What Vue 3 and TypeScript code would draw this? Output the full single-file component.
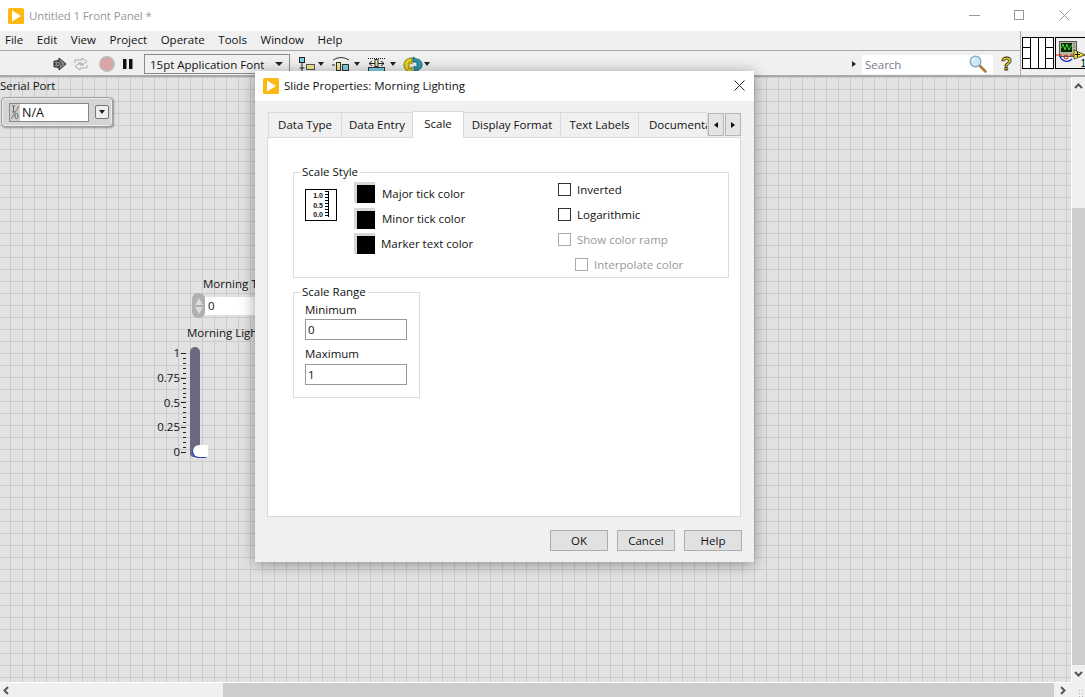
<script setup lang="ts">
const menus = ["File", "Edit", "View", "Project", "Operate", "Tools", "Window", "Help"];

const tabs = [
  { label: "Data Type", width: 74 },
  { label: "Data Entry", width: 71 },
  { label: "Scale", width: 51, active: true },
  { label: "Display Format", width: 97 },
  { label: "Text Labels", width: 78 },
  { label: "Documentation", width: 69 },
];

const colors = ["Major tick color", "Minor tick color", "Marker text color"];
const scaleMarks = ["1", "0.75", "0.5", "0.25", "0"];
const tickCount = 21;
</script>

<template>
  <div class="window">
    <header class="titlebar">
      <svg class="app-icon" width="16" height="16" viewBox="0 0 16 16">
        <rect width="16" height="16" rx="1.5" fill="#fdb913" />
        <path d="M4 2.5 L13 8 L4 13.5 Z" fill="#fff" />
      </svg>
      <span class="title-text">Untitled 1 Front Panel *</span>
      <div class="win-controls">
        <svg width="11" height="11" viewBox="0 0 11 11"><path d="M0 5.5H11" stroke="#999" /></svg>
        <svg width="11" height="11" viewBox="0 0 11 11"><rect x=".5" y=".5" width="9" height="9" fill="none" stroke="#999" /></svg>
        <svg width="11" height="11" viewBox="0 0 11 11"><path d="M.5.5L10.5 10.5M10.5.5L.5 10.5" stroke="#999" /></svg>
      </div>
    </header>

    <div class="chrome">
      <div class="chrome-main">
        <nav class="menubar">
          <span v-for="m in menus" :key="m">{{ m }}</span>
        </nav>
        <div class="toolbar">
          <svg class="tool-run" width="16" height="14" viewBox="0 0 16 14">
            <path d="M2 4H7V1L14 7L7 13V10H2Z" fill="#8a8a8a" stroke="#222" />
            <path d="M2 7H8M5 3L10 7L5 11" fill="none" stroke="#111" stroke-dasharray="2 1" />
          </svg>
          <svg class="tool-cont" width="16" height="14" viewBox="0 0 16 14">
            <path d="M2 6V3H9V1L14 4.5L9 8V6H5" fill="#f2f2f2" stroke="#aaa" />
            <path d="M14 8V11H7V13L2 9.5L7 6V8H11" fill="#f2f2f2" stroke="#aaa" />
          </svg>
          <svg class="tool-abort" width="16" height="16" viewBox="0 0 16 16">
            <circle cx="8" cy="8" r="7.2" fill="#d9a5a5" stroke="#bbb" stroke-width="1.4" />
          </svg>
          <svg class="tool-pause" width="10" height="10" viewBox="0 0 10 10">
            <path d="M0 0H3.5V10H0ZM6 0H9.5V10H6Z" fill="#111" />
          </svg>
          <div class="font-ring">
            <span>15pt Application Font</span>
            <i class="caret"></i>
          </div>
          <div class="align-tools">
            <span class="tool-drop">
              <svg width="18" height="17" viewBox="0 0 18 17">
                <rect x=".5" y="1.5" width="5" height="5" fill="#7fd0e8" stroke="#222" />
                <path d="M3 7V15M.5 12H5.5" stroke="#222" />
                <rect x="7.5" y="8.5" width="8" height="5" fill="#f2ea8e" stroke="#555" />
                <path d="M8 15.5H15" stroke="#555" stroke-dasharray="1 1" />
              </svg>
              <i class="caret small"></i>
            </span>
            <span class="tool-drop">
              <svg width="22" height="17" viewBox="0 0 22 17">
                <path d="M2 4Q10 -1 18 4" fill="none" stroke="#333" />
                <path d="M1 9H4" stroke="#222" />
                <rect x="5.5" y="6.5" width="4" height="8" fill="#f2ea8e" stroke="#333" />
                <rect x="11.5" y="8.5" width="6" height="6" fill="#7fd0e8" stroke="#333" />
              </svg>
              <i class="caret small"></i>
            </span>
            <span class="tool-drop">
              <svg width="22" height="17" viewBox="0 0 22 17">
                <path d="M1 2.5H18" stroke="#222" stroke-dasharray="1 1" />
                <path d="M2 7.5H17M5 5L2 7.5L5 10M14 5L17 7.5L14 10" fill="none" stroke="#222" />
                <rect x="8" y="3.5" width="3" height="7" fill="#f2ea8e" stroke="#333" />
                <rect x="1.5" y="11.5" width="16" height="4" fill="#7fd0e8" stroke="#333" />
              </svg>
              <i class="caret small"></i>
            </span>
            <span class="tool-drop">
              <svg width="20" height="17" viewBox="0 0 20 17">
                <path d="M9 2C4 2 1 5 1 9C1 12 3 15 6 15.5L9 16V11L6 13V6L9 8Z" fill="#e3d317" stroke="#8a7c00" />
                <path d="M10 1L13 3C17 3 19 6 19 9C19 12 16 15 11 15V10L14 12V6L10 6Z" fill="#2d9cb0" stroke="#14606e" />
              </svg>
              <i class="caret small"></i>
            </span>
          </div>
          <div class="search-area">
            <i class="search-arrow"></i>
            <div class="search-box">
              <span>Search</span>
              <svg width="18" height="18" viewBox="0 0 18 18">
                <path d="M10 10L16.5 16.5" stroke="#b07a3e" stroke-width="2.6" stroke-linecap="round" />
                <circle cx="6.5" cy="6.5" r="5.3" fill="#cfe6f7" stroke="#7fa9c9" stroke-width="1.4" />
                <path d="M3.5 6A3 3 0 0 1 6.5 3" fill="none" stroke="#fff" stroke-width="1.2" />
              </svg>
            </div>
            <span class="help-mark">?</span>
          </div>
        </div>
      </div>
      <div class="chrome-right">
        <div class="conn-pane">
          <span></span><span class="tall"></span><span class="tall"></span><span></span>
          <span></span><span></span>
          <span></span><span></span>
        </div>
        <div class="vi-icon">
          <svg width="30" height="31" viewBox="0 0 30 31">
            <rect x="3.5" y="3.5" width="17" height="15" fill="#bdb89a" stroke="#555" />
            <rect x="5" y="5" width="11" height="9" fill="#0a2a0a" />
            <path d="M5.5 10L7 6L9 12L11 6L13 12L15.5 7" fill="none" stroke="#2fdc2f" />
            <path d="M18 5V12" stroke="#555" stroke-dasharray="1 1" />
            <path d="M4 18A7 7 0 0 0 16 21" fill="none" stroke="#1a2ec8" stroke-width="1.2" />
            <circle cx="10" cy="19" r="2" fill="none" stroke="#d01a1a" />
            <path d="M0 17H6M14 17H30" stroke="#e01010" />
            <path d="M18 12L29 17L18 21Z" fill="#f5ea10" stroke="#555" />
            <path d="M19 16.5H24M21.5 14V19" stroke="#111" />
            <text x="24.5" y="29" class="icon-num">1</text>
          </svg>
        </div>
      </div>
    </div>

    <div class="workspace">
      <div class="canvas">
        <div class="ctl-label serial-label">Serial Port</div>
        <div class="serial">
          <div class="serial-field">
            <svg class="io-tag" width="10" height="17" viewBox="0 0 10 17">
              <rect width="10" height="17" fill="#cfcfcf" />
              <path d="M1 15L9 2" stroke="#777" />
              <path d="M2 2H5M3.5 2V8M2 8H5" fill="none" stroke="#666" />
              <ellipse cx="6.5" cy="12" rx="1.6" ry="2.6" fill="none" stroke="#666" />
            </svg>
            <span class="serial-value">N/A</span>
          </div>
          <div class="serial-btn"><i class="caret small"></i></div>
        </div>

        <div class="ctl-label time-label">Morning Time</div>
        <div class="numeric">
          <div class="spinner">
            <i class="up"></i>
            <i class="down"></i>
          </div>
          <div class="numeric-field">0</div>
        </div>

        <div class="ctl-label light-label">Morning Lighting</div>
        <div class="slide">
          <div class="slide-marks">
            <span v-for="s in scaleMarks" :key="s">{{ s }}</span>
          </div>
          <div class="slide-ticks">
            <i v-for="n in tickCount" :key="n" :class="{ major: (n - 1) % 5 === 0 }"></i>
          </div>
          <div class="slide-track"></div>
          <div class="slide-thumb"></div>
        </div>
      </div>
      <aside class="vscroll">
        <div class="scroll-end">
          <svg width="9" height="6" viewBox="0 0 9 6"><path d="M1 5L4.5 1.5L8 5" fill="none" stroke="#555" stroke-width="2" /></svg>
        </div>
        <div class="vtrack"></div>
        <div class="scroll-end bottom">
          <svg width="9" height="6" viewBox="0 0 9 6"><path d="M1 1L4.5 4.5L8 1" fill="none" stroke="#555" stroke-width="2" /></svg>
        </div>
      </aside>
    </div>

    <footer class="hscroll">
      <div class="scroll-left">
        <svg width="6" height="9" viewBox="0 0 6 9"><path d="M5 1L1.5 4.5L5 8" fill="none" stroke="#555" stroke-width="2" /></svg>
      </div>
      <div class="hthumb"></div>
      <div class="scroll-right">
        <svg width="6" height="9" viewBox="0 0 6 9"><path d="M1 1L4.5 4.5L1 8" fill="none" stroke="#555" stroke-width="2" /></svg>
      </div>
      <div class="grip"></div>
    </footer>

    <section class="dialog">
      <div class="dialog-title">
        <svg width="16" height="16" viewBox="0 0 16 16">
          <rect width="16" height="16" rx="1.5" fill="#fdb913" />
          <path d="M4 2.5 L13 8 L4 13.5 Z" fill="#fff" />
        </svg>
        <span>Slide Properties: Morning Lighting</span>
        <svg class="dialog-close" width="11" height="11" viewBox="0 0 11 11">
          <path d="M.5.5L10.5 10.5M10.5.5L.5 10.5" stroke="#222" />
        </svg>
      </div>
      <div class="dialog-body">
        <div class="tabs">
          <div
            v-for="t in tabs"
            :key="t.label"
            class="tab"
            :class="{ active: t.active }"
            :style="{ width: t.width + 'px' }"
          >
            {{ t.label }}
          </div>
          <div class="tab-arrows">
            <button><i class="arrow-l"></i></button>
            <button><i class="arrow-r"></i></button>
          </div>
        </div>

        <div class="tab-panel">
          <fieldset class="scale-style">
            <legend>Scale Style</legend>
            <div class="style-left">
              <div class="scale-preview">
                <div class="preview-nums"><span>1.0</span><span>0.5</span><span>0.0</span></div>
                <div class="preview-ticks"></div>
              </div>
              <div class="color-list">
                <div v-for="c in colors" :key="c" class="color-row">
                  <span class="swatch"></span>
                  <span>{{ c }}</span>
                </div>
              </div>
            </div>
            <div class="style-right">
              <label class="check"><i></i>Inverted</label>
              <label class="check"><i></i>Logarithmic</label>
              <label class="check disabled"><i></i>Show color ramp</label>
              <label class="check disabled nested"><i></i>Interpolate color</label>
            </div>
          </fieldset>

          <fieldset class="scale-range">
            <legend>Scale Range</legend>
            <div class="range-label">Minimum</div>
            <div class="range-input">0</div>
            <div class="range-label second">Maximum</div>
            <div class="range-input">1</div>
          </fieldset>
        </div>

        <div class="dialog-actions">
          <button class="dlg-btn">OK</button>
          <button class="dlg-btn">Cancel</button>
          <button class="dlg-btn">Help</button>
        </div>
      </div>
    </section>
  </div>
</template>

<style>
html,
body {
  margin: 0;
  overflow: hidden;
}
</style>

<style scoped>
.window {
  position: relative;
  width: 1085px;
  height: 697px;
  display: flex;
  flex-direction: column;
  overflow: hidden;
  font-family: "Open Sans", "Noto Sans", sans-serif;
  font-size: 11.5px;
  color: #111;
  background: #f0f0f0;
}

i {
  display: block;
}

.titlebar {
  height: 31px;
  flex: none;
  display: flex;
  align-items: center;
  padding-left: 8px;
  background: #fff;
}

.title-text {
  margin-left: 5px;
  color: #999;
  letter-spacing: -0.15px;
}

.win-controls {
  margin-left: auto;
  display: flex;
  gap: 34px;
  padding-right: 15px;
}

.chrome {
  flex: none;
  height: 46px;
  display: flex;
  border-bottom: 2px solid #a9a9a9;
  box-sizing: border-box;
}

.chrome-main {
  flex: none;
  width: 1020px;
  display: flex;
  flex-direction: column;
  border-right: 1px solid #a9a9a9;
}

.menubar {
  height: 20px;
  display: flex;
  align-items: center;
  gap: 13.6px;
  padding: 0 0 2px 5px;
  box-sizing: border-box;
  border-bottom: 1px solid #a9a9a9;
}

.toolbar {
  flex: 1;
  display: flex;
  align-items: center;
  padding: 2px 0 0 52px;
}

.tool-cont {
  margin-left: 5px;
}

.tool-abort {
  margin-left: 10px;
}

.tool-pause {
  margin-left: 8px;
}

.font-ring {
  margin-left: 11px;
  width: 146px;
  height: 20px;
  box-sizing: border-box;
  display: flex;
  align-items: center;
  justify-content: space-between;
  padding: 0 6px 0 5px;
  border: 1px solid #8a8a8a;
}

.caret {
  width: 0;
  height: 0;
  border-left: 4px solid transparent;
  border-right: 4px solid transparent;
  border-top: 4px solid #222;
}

.caret.small {
  border-left-width: 3.5px;
  border-right-width: 3.5px;
}

.align-tools {
  display: flex;
  gap: 7px;
  margin-left: 9px;
}

.tool-drop {
  display: flex;
  align-items: center;
  gap: 1px;
}

.search-area {
  margin-left: auto;
  display: flex;
  align-items: center;
}

.search-arrow {
  width: 0;
  height: 0;
  border-top: 3px solid transparent;
  border-bottom: 3px solid transparent;
  border-left: 4px solid #222;
  margin-right: 1px;
}

.search-box {
  margin-left: 5px;
  width: 131px;
  height: 19px;
  box-sizing: border-box;
  background: #fff;
  display: flex;
  align-items: center;
  justify-content: space-between;
  padding: 0 6px 0 3px;
  color: #7a7a8c;
}

.help-mark {
  width: 27px;
  text-align: center;
  font: bold 18px "Liberation Sans", sans-serif;
  color: #f5e000;
  -webkit-text-stroke: 0.8px #222;
}

.chrome-right {
  flex: 1;
  min-width: 0;
  display: flex;
  gap: 1px;
  padding: 6px 0 0 1px;
}

.conn-pane {
  flex: none;
  width: 32px;
  height: 32px;
  box-sizing: border-box;
  display: grid;
  grid-template-columns: repeat(4, 1fr);
  grid-template-rows: repeat(3, 1fr);
  border: 1px solid #000;
  background: #000;
  gap: 1px;
}

.conn-pane span {
  background: #fff;
}

.conn-pane .tall {
  grid-row: span 3;
}

.vi-icon {
  flex: 1;
  min-width: 0;
  height: 32px;
  box-sizing: border-box;
  border: 1px solid #000;
  border-right: 0;
  overflow: hidden;
}

.vi-icon svg {
  display: block;
}

.icon-num {
  font: 10px "Liberation Sans", sans-serif;
}

.workspace {
  flex: 1;
  min-height: 0;
  display: flex;
}

.canvas {
  position: relative;
  flex: 1;
  border-right: 1px solid #fff;
  border-bottom: 1px solid #fff;
  background-color: #e2e2e2;
  background-image: linear-gradient(#cbcbcb 1px, transparent 1px), linear-gradient(90deg, #cbcbcb 1px, transparent 1px);
  background-size: 12px 12px;
  background-position: 10px 0;
}

.vscroll {
  width: 13px;
  flex: none;
  display: flex;
  flex-direction: column;
  background: #f0f0f0;
}

.scroll-end {
  height: 17px;
  flex: none;
  display: flex;
  align-items: center;
  justify-content: center;
}

.scroll-end.bottom {
  height: 18px;
}

.vtrack {
  flex: 1;
  margin-top: 114px;
  background: #cdcdcd;
}

.hscroll {
  height: 14px;
  flex: none;
  display: flex;
  background: #f0f0f0;
}

.scroll-left {
  width: 223px;
  flex: none;
  display: flex;
  align-items: center;
  padding-left: 3px;
  box-sizing: border-box;
}

.scroll-right {
  width: 18px;
  flex: none;
  display: flex;
  align-items: center;
  justify-content: center;
}

.hthumb {
  width: 831px;
  background: #cdcdcd;
}

.grip {
  flex: 1;
  align-self: flex-end;
  height: 8px;
  margin-left: 6px;
  background-image: radial-gradient(#b5b5b5 1px, transparent 1px);
  background-size: 3px 3px;
}

/* panel controls */
.ctl-label {
  position: absolute;
  white-space: nowrap;
  line-height: 16px;
}

.serial-label {
  left: 0;
  top: 1px;
}

.serial {
  position: absolute;
  left: 1px;
  top: 20px;
  width: 112px;
  height: 30px;
  box-sizing: border-box;
  display: flex;
  align-items: center;
  gap: 6px;
  padding: 0 3px 0 7px;
  border-radius: 4px;
  background: #d5d5d5;
  border: 1px solid #a0a0a0;
  box-shadow: inset 0 0 0 1px #ececec, 1px 1px 2px rgba(0, 0, 0, 0.35);
}

.serial-field {
  width: 81px;
  height: 19px;
  display: flex;
  box-sizing: border-box;
  border: 1px solid #888;
  background: #fff;
}

.serial-value {
  margin-left: 2px;
  font-size: 12.5px;
  line-height: 17px;
}

.serial-btn {
  width: 14px;
  height: 14px;
  box-sizing: border-box;
  border: 1px solid #777;
  border-radius: 2px;
  background: #ededed;
  display: flex;
  align-items: center;
  justify-content: center;
}

.time-label {
  left: 203px;
  top: 199px;
}

.numeric {
  position: absolute;
  left: 192px;
  top: 216px;
  display: flex;
  align-items: center;
}

.spinner {
  width: 13px;
  height: 25px;
  border-radius: 6px;
  background: #b0b0b0;
  display: flex;
  flex-direction: column;
  align-items: center;
  justify-content: center;
  gap: 2px;
}

.spinner .up {
  width: 0;
  height: 0;
  border-left: 4px solid transparent;
  border-right: 4px solid transparent;
  border-bottom: 7px solid #dcdcdc;
}

.spinner .down {
  width: 0;
  height: 0;
  border-left: 4px solid transparent;
  border-right: 4px solid transparent;
  border-top: 7px solid #dcdcdc;
}

.numeric-field {
  width: 60px;
  height: 18px;
  line-height: 17px;
  padding-left: 3px;
  background: #fff;
}

.light-label {
  left: 187px;
  top: 248px;
}

.slide {
  position: absolute;
  left: 150px;
  top: 270px;
  width: 60px;
  height: 112px;
}

.slide-marks {
  position: absolute;
  left: 0;
  top: 0;
  width: 30px;
  height: 111px;
  display: flex;
  flex-direction: column;
  justify-content: space-between;
  align-items: flex-end;
  line-height: 12px;
}

.slide-ticks {
  position: absolute;
  left: 31px;
  top: 6px;
  width: 5px;
  height: 100px;
  display: flex;
  flex-direction: column;
  justify-content: space-between;
  align-items: flex-end;
}

.slide-ticks i {
  width: 3px;
  height: 1px;
  background: #222;
}

.slide-ticks i.major {
  width: 5px;
}

.slide-track {
  position: absolute;
  left: 40px;
  top: 0;
  width: 10px;
  height: 110px;
  border-radius: 5px 5px 4px 4px;
  background: #696a80;
}

.slide-thumb {
  position: absolute;
  left: 43px;
  top: 98px;
  width: 15px;
  height: 12px;
  border-radius: 7px 2px 2px 7px;
  background: #fff;
  box-shadow: -1px 1px 0 #2a3fc0;
}

/* dialog */
.dialog {
  position: absolute;
  left: 255px;
  top: 71px;
  width: 499px;
  height: 491px;
  display: flex;
  flex-direction: column;
  background: #f0f0f0;
  box-shadow: 0 2px 14px rgba(0, 0, 0, 0.38);
}

.dialog-title {
  height: 30px;
  flex: none;
  display: flex;
  align-items: center;
  gap: 5px;
  padding: 0 0 1px 8px;
  box-sizing: border-box;
  background: #fff;
}

.dialog-close {
  margin-left: auto;
  margin-right: 9px;
}

.dialog-body {
  flex: 1;
  display: flex;
  flex-direction: column;
  padding: 10px 13px 0 12px;
}

.tabs {
  display: flex;
  height: 26px;
  align-items: flex-end;
  position: relative;
  padding-left: 1px;
}

.tab {
  height: 25px;
  line-height: 24px;
  box-sizing: border-box;
  text-align: center;
  white-space: nowrap;
  overflow: hidden;
  background: #f0f0f0;
  border: 1px solid #dadada;
  border-width: 1px 1px 0 0;
}

.tab:first-child {
  border-left: 1px solid #dadada;
}

.tab.active {
  height: 27px;
  line-height: 23px;
  margin-bottom: -1px;
  position: relative;
  z-index: 1;
  background: #fff;
  border-left: 0;
}

.tab:nth-child(6) {
  text-align: left;
  padding-left: 10px;
}

.tab-arrows {
  position: absolute;
  right: 0;
  top: 2px;
  display: flex;
  gap: 1px;
}

.tab-arrows button {
  width: 16px;
  height: 23px;
  padding: 0;
  background: #e4e4e4;
  border: 1px solid #b5b5b5;
  display: flex;
  align-items: center;
  justify-content: center;
}

.arrow-l {
  width: 0;
  height: 0;
  border-top: 3px solid transparent;
  border-bottom: 3px solid transparent;
  border-right: 4px solid #111;
}

.arrow-r {
  width: 0;
  height: 0;
  border-top: 3px solid transparent;
  border-bottom: 3px solid transparent;
  border-left: 4px solid #111;
}

.tab-panel {
  height: 380px;
  flex: none;
  box-sizing: border-box;
  padding: 26px 11px 0 25px;
  background: #fff;
  border: 1px solid #dadada;
}

fieldset {
  margin: 0;
  border: 1px solid #dcdcdc;
  box-sizing: border-box;
}

legend {
  padding: 0 2px;
  margin-left: 6px;
  line-height: 16px;
}

.scale-style {
  height: 114px;
  display: flex;
  padding: 0;
  position: relative;
}

.style-left {
  position: absolute;
  left: 11px;
  top: 2px;
  display: flex;
}

.scale-preview {
  width: 32px;
  height: 32px;
  margin-top: 7px;
  border: 1px solid #000;
  display: flex;
  justify-content: center;
  gap: 2px;
  padding-top: 1px;
  box-sizing: border-box;
}

.preview-nums {
  display: flex;
  flex-direction: column;
  font: bold 7px/9.5px "Liberation Sans", sans-serif;
}

.preview-ticks {
  width: 3px;
  height: 26px;
  background-image: linear-gradient(#000 1px, transparent 1px);
  background-size: 3px 3px;
  border-right: 1px solid #000;
}

.color-list {
  margin-left: 17px;
  display: flex;
  flex-direction: column;
  gap: 4.5px;
}

.color-row {
  display: flex;
  align-items: center;
  gap: 7px;
  height: 21px;
}

.color-row:first-child span:last-child {
  margin-top: 2px;
}

.color-row:last-child {
  gap: 6px;
}

.swatch {
  width: 21px;
  height: 21px;
  background: #000;
  border-top: 3px solid #d8d8d8;
  border-left: 3px solid #d8d8d8;
  box-sizing: border-box;
}

.style-right {
  position: absolute;
  left: 264px;
  top: 1px;
  display: flex;
  flex-direction: column;
  gap: 9px;
}

.check {
  display: flex;
  align-items: center;
  gap: 6px;
  height: 16px;
}

.check i {
  width: 13px;
  height: 13px;
  box-sizing: border-box;
  background: #fff;
  border: 1px solid #333;
}

.check.disabled {
  color: #999;
}

.check.disabled i {
  border-color: #aaa;
}

.check.nested {
  margin-left: 17px;
}

.scale-range {
  width: 127px;
  height: 114px;
  margin-top: 6px;
  padding: 2px 12px 0 11px;
}

.scale-range legend {
  margin-left: -5px;
}

.range-label {
  line-height: 16px;
}

.range-label.second {
  margin-top: 6px;
  margin-bottom: 2px;
}

.range-input {
  height: 21px;
  margin-top: 1px;
  box-sizing: border-box;
  border: 1px solid #999;
  padding-left: 2px;
  line-height: 19px;
  background: #fff;
}

.dialog-actions {
  display: flex;
  justify-content: flex-end;
  gap: 9px;
  margin: 13px -1px 0 0;
}

.dlg-btn {
  width: 58px;
  height: 21px;
  padding: 0;
  font: inherit;
  color: #111;
  background: #e1e1e1;
  border: 1px solid #adadad;
}
</style>
